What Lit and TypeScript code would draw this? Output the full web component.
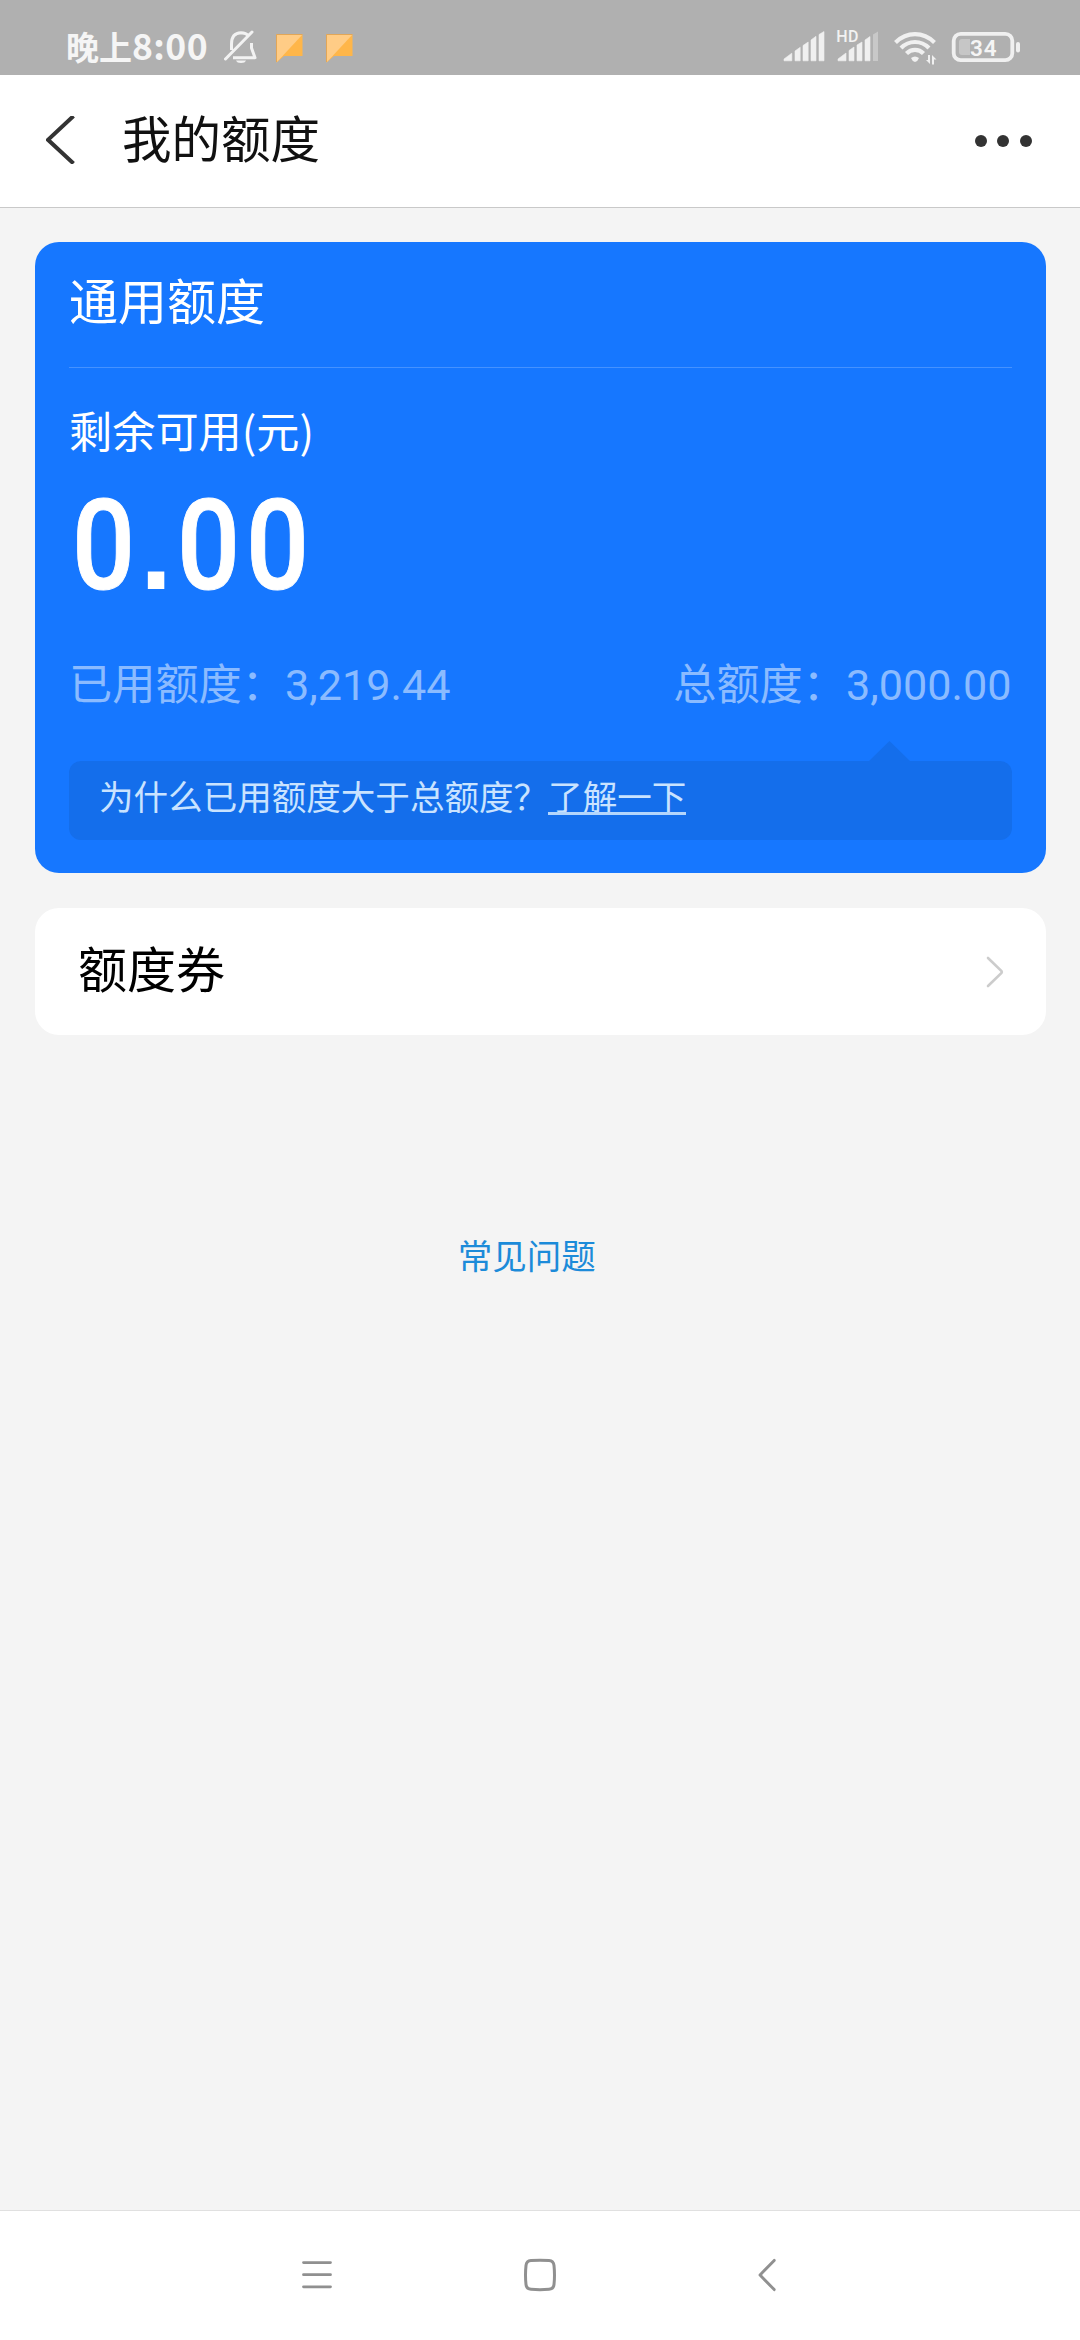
import { LitElement, html, css, svg } from "lit";
import { customElement, property } from "lit/decorators.js";

@customElement("status-bar")
class StatusBar extends LitElement {
  @property() time = "8:00";
  @property() battery = "34";

  static styles = css`
    :host { display: block; height: 75px; background: #b0b0b0; color: #f5f5f5; }
    .bar { display: flex; align-items: flex-start; height: 75px; }
    .clock {
      display: flex; align-items: baseline; width: 158px; padding-left: 66px;
      font-weight: 700; font-size: 33px; line-height: 40px; margin-top: 25px; white-space: nowrap;
    }
    .digits { font-size: 35.5px; letter-spacing: 0.4px; }
    .left, .right { display: block; flex: none; }
    .gap { flex: 1; }
    .hd { font: 500 16px Roboto, sans-serif; letter-spacing: 0.5px; }
    .level { font: 600 22.5px Roboto, sans-serif; letter-spacing: 0.8px; }
  `;

  render() {
    const bars = [
      "M784 60.8V59L791.8 53.2V60.8Z",
      "M795 60.8V51L800.2 47.3V60.8Z",
      "M803 60.8V45.5L808.2 42V60.8Z",
      "M811 60.8V40L816 36.3V60.8Z",
      "M819 60.8V34.5L824 31.5V60.8Z",
    ];
    const bars2 = [
      "M838 60.8V59L846 53V60.8Z",
      "M849 60.8V50.5L854 47V60.8Z",
      "M857 60.8V45L862 42V60.8Z",
      "M865 60.8V40L870 36.5V60.8Z",
    ];
    return html`<div class="bar">
      <div class="clock">晚上<span class="digits">${this.time}</span></div>
      <svg class="left" width="136" height="75" viewBox="224 0 136 75">
        <g fill="none" stroke="#f2f2f2" stroke-width="3" stroke-linejoin="round">
          <path d="M231.5 50V44Q231.5 33 241 32.7Q246 32.7 249 36M251.5 43V48L255 57.7H233" />
          <path d="M225.5 59L252 32" stroke-linecap="round" />
        </g>
        <path d="M236 60.5H246Q245 63 241 63Q237 63 236 60.5Z" fill="#f2f2f2" />
        ${[276.5, 326.5].map(
          (x) => svg`<g>
            <path d=${`M${x} 34.5H${x + 26}V56H${x + 7.5}L${x} 62.5Z`} fill="#ffb649" />
            <path d=${`M${x} 34.5H${x + 26}L${x} 62.5Z`} fill="#ffcc86" />
            <path d=${`M${x} 62V34.5H${x + 26}`} fill="none" stroke="#dea04e" stroke-width=".8" />
          </g>`
        )}
      </svg>
      <div class="gap"></div>
      <svg class="right" width="300" height="75" viewBox="780 0 300 75">
        <g fill="#f0f0f0" stroke="#f0f0f0" stroke-width=".6" stroke-linejoin="round">
          ${bars.map((d) => svg`<path d=${d} />`)}
          ${bars2.map((d) => svg`<path d=${d} />`)}
        </g>
        <path d="M873 61V34.5L878 31.5V61Z" fill="#c8c8c8" />
        <text class="hd" x="836.2" y="41.7" fill="#f2f2f2">HD</text>
        <g fill="none" stroke="#f0f0f0" stroke-width="4.2">
          <path d="M895.5 42.5Q904 34.2 915 34.2T934.5 42.5" />
          <path d="M901 48Q907 42 915 42T929 48" />
          <path d="M906.5 53.5Q910 49.8 915 49.8T923.5 53.5" />
        </g>
        <path d="M911 58Q915 55 919 58Q918 61 915 62Q912 61 911 58Z" fill="#f0f0f0" />
        <path d="M926 60H928V55H930V64ZM932 64.5V55L936.5 59.5H934V64.5Z" fill="#f0f0f0" />
        <rect x="953.7" y="33.8" width="58.6" height="26.4" rx="7" fill="none" stroke="#f0f0f0" stroke-width="3.8" />
        <path d="M970 39V55H962Q959 55 959 52V42Q959 39 962 39Z" fill="#c6c6c6" />
        <rect x="1016" y="42" width="4" height="10.5" rx="2" fill="#f0f0f0" />
        <text class="level" x="970" y="55.7" fill="#f5f5f5">${this.battery}</text>
      </svg>
    </div>`;
  }
}

@customElement("quota-card")
class QuotaCard extends LitElement {
  @property() amount = "0.00";

  static styles = css`
    :host { display: block; }
    .card {
      height: 631px; box-sizing: border-box; background: #1677ff; border-radius: 24px;
      padding: 0 34px; display: flex; flex-direction: column; color: #fff;
    }
    .title { height: 125px; line-height: 114px; font-size: 49px; border-bottom: 1px solid #4592ff; }
    .label { margin-top: 31px; line-height: 60px; font-size: 43.2px; }
    .amount {
      height: 128px; margin-top: 23px; display: flex; align-items: baseline; line-height: 128px;
      font-family: Roboto, sans-serif; font-weight: 500; font-size: 126px; white-space: nowrap;
    }
    .digit {
      display: flex; justify-content: center; width: 69.2px; transform: scaleX(0.88);
      -webkit-text-stroke: 1px #fff;
    }
    .point {
      display: flex; justify-content: center; width: 36px;
      font-family: "Liberation Sans", sans-serif; font-weight: 700; font-size: 116px;
    }
    .row {
      display: flex; justify-content: space-between; height: 62px; margin-top: 41px;
      font-size: 43.2px; line-height: 60px; color: #8bbbff;
    }
    .num { font-family: Roboto, sans-serif; }
    .tip {
      position: relative; margin-top: 48px; height: 78.5px; box-sizing: border-box; padding-left: 30px;
      border-radius: 12px; background: #146eeb; font-size: 34.56px; line-height: 69px;
      color: #c9e3ff; white-space: nowrap;
    }
    .arrow { position: absolute; left: 799px; top: -20.5px; display: block; }
    .link { display: inline-block; line-height: 40px; position: relative; }
    .link::after {
      content: ""; position: absolute; left: 0; right: 0; bottom: 0; height: 3px; background: #b4d6fc;
    }
  `;

  render() {
    return html`<section class="card">
      <div class="title">通用额度</div>
      <div class="label">剩余可用(元)</div>
      <div class="amount">${[...this.amount].map((c) => html`<span class=${c === "." ? "point" : "digit"}>${c}</span>`)}</div>
      <div class="row">
        <div>已用额度：<span class="num">3,219.44</span></div>
        <div>总额度：<span class="num">3,000.00</span></div>
      </div>
      <div class="tip">
        <svg class="arrow" width="43" height="21" viewBox="0 0 43 21"><path d="M0 21L21.5 0L43 21Z" fill="#146eeb" /></svg>为什么已用额度大于总额度？<span class="link">了解一下</span>
      </div>
    </section>`;
  }
}

@customElement("app-root")
class AppRoot extends LitElement {
  static styles = css`
    :host {
      display: block; width: 1080px; height: 2340px; overflow: hidden; background: #f4f4f4;
      font-family: "Noto Sans CJK SC", sans-serif;
    }
    .page { display: flex; flex-direction: column; height: 2340px; }
    .header {
      height: 133px; box-sizing: border-box; flex: none; background: #fff; border-bottom: 1px solid #c9c9c9;
      display: flex; padding: 0 31px 0 46px;
    }
    .back { display: block; margin-top: 41px; }
    .heading { flex: 1; margin: 0 0 0 45px; font-size: 49.5px; line-height: 124px; font-weight: 400; color: #111; }
    .more { display: flex; gap: 10.7px; margin: 60px 17px 0 0; }
    .dot { width: 12px; height: 12px; border-radius: 50%; background: #333; }
    .main { flex: 1; display: flex; flex-direction: column; padding: 34px 34.5px 0 35px; }
    .coupon {
      margin-top: 35px; height: 127px; box-sizing: border-box; border-radius: 24px; background: #fff;
      display: flex; align-items: center; justify-content: space-between; padding: 0 42px 0 43px;
      font-size: 49px; color: #000;
    }
    .name { line-height: 80px; margin-top: -10px; }
    .chevron { display: block; }
    .faq {
      margin-top: 194px; padding-right: 27px; line-height: 50px; font-size: 34.56px;
      text-align: center; color: #1c8bd9;
    }
    .nav { flex: none; height: 130px; box-sizing: border-box; border-top: 1px solid #e0e0e0; background: #fff; }
    .nav-icons { display: flex; gap: 187px; padding: 46px 0 0 299px; }
    .icon { display: block; width: 36px; height: 36px; }
  `;

  render() {
    return html`<div class="page">
      <status-bar></status-bar>
      <header class="header">
        <svg class="back" width="31" height="48" viewBox="0 0 31 48"><path d="M27.5 0L2 23.8L27.5 47.5" fill="none" stroke="#333" stroke-width="4" /></svg>
        <h1 class="heading">我的额度</h1>
        <div class="more"><i class="dot"></i><i class="dot"></i><i class="dot"></i></div>
      </header>
      <main class="main">
        <quota-card></quota-card>
        <div class="coupon">
          <div class="name">额度券</div>
          <svg class="chevron" width="18" height="32" viewBox="0 0 18 32"><path d="M2 2L15.5 15Q16.2 16 15.5 17L2 30" fill="none" stroke="#ccc" stroke-width="2.6" stroke-linecap="round" /></svg>
        </div>
        <div class="faq">常见问题</div>
      </main>
      <nav class="nav">
        <div class="nav-icons">
          <svg class="icon" viewBox="0 0 36 36"><path d="M4.5 5.6H31.5M4.5 17.7H31.5M4.5 29.8H31.5" stroke="#909090" stroke-width="2.8" stroke-linecap="round" /></svg>
          <svg class="icon" viewBox="0 0 36 36"><path d="M9 3.600Q18 3 27 3.600Q31.500 4 32 8.500Q33 18 32 27.500Q31.500 32 27 32.300Q18 33 9 32.300Q4.500 32 4 27.500Q3 18 4 8.500Q4.500 4 9 3.600Z" fill="none" stroke="#909090" stroke-width="3" /></svg>
          <svg class="icon" viewBox="0 0 36 36"><path d="M29.200 3.400L15 18L29.200 32.600" fill="none" stroke="#909090" stroke-width="2.900" stroke-linecap="round" stroke-linejoin="round" /></svg>
        </div>
      </nav>
    </div>`;
  }
}
